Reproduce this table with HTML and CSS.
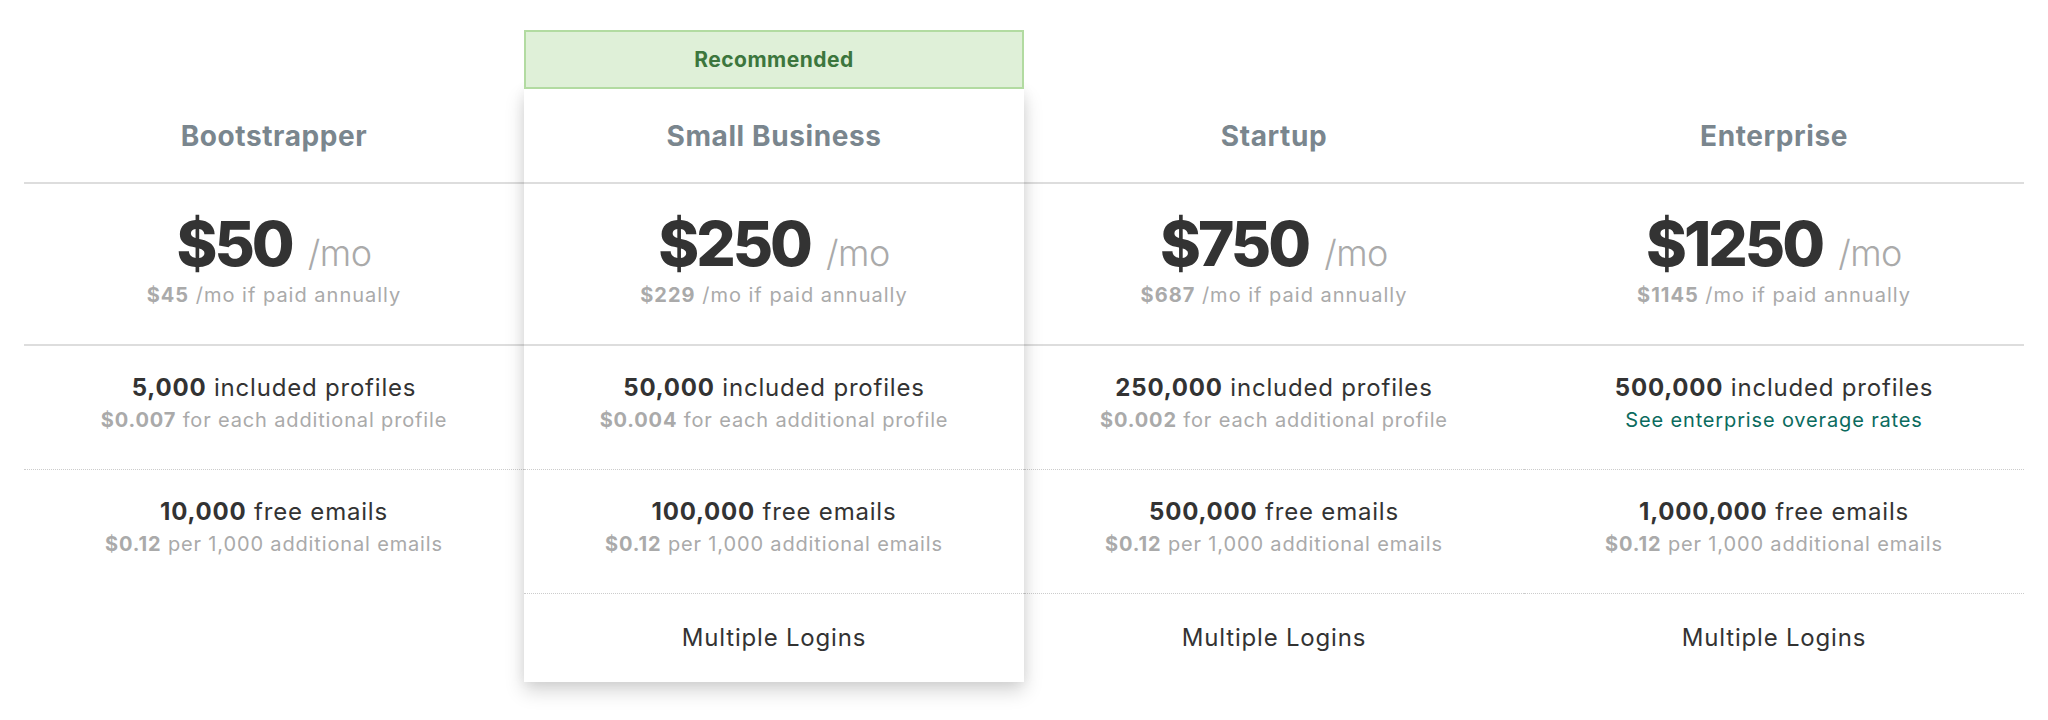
FILE: index.html
```html
<!DOCTYPE html>
<html lang="en">
<head>
<meta charset="utf-8">
<title>Pricing</title>
<link rel="stylesheet" href="styles.css">
</head>
<body>
<div class="pricing">
  <div class="plan">
    <div class="plan-body">
      <div class="plan-name">Bootstrapper</div>
      <div class="plan-price">
        <div class="price"><span class="amount">$50</span><span class="per">/mo</span></div>
        <div class="annual"><b>$45</b> /mo if paid annually</div>
      </div>
      <div class="feature">
        <div class="main"><b>5,000</b> included profiles</div>
        <div class="sub"><b>$0.007</b> for each additional profile</div>
      </div>
      <div class="feature">
        <div class="main"><b>10,000</b> free emails</div>
        <div class="sub"><b>$0.12</b> per 1,000 additional emails</div>
      </div>
    </div>
  </div>

  <div class="plan featured">
    <div class="badge">Recommended</div>
    <div class="plan-body">
      <div class="plan-name">Small Business</div>
      <div class="plan-price">
        <div class="price"><span class="amount">$250</span><span class="per">/mo</span></div>
        <div class="annual"><b>$229</b> /mo if paid annually</div>
      </div>
      <div class="feature">
        <div class="main"><b>50,000</b> included profiles</div>
        <div class="sub"><b>$0.004</b> for each additional profile</div>
      </div>
      <div class="feature">
        <div class="main"><b>100,000</b> free emails</div>
        <div class="sub"><b>$0.12</b> per 1,000 additional emails</div>
      </div>
      <div class="feature single">
        <div class="main">Multiple Logins</div>
      </div>
    </div>
  </div>

  <div class="plan">
    <div class="plan-body">
      <div class="plan-name">Startup</div>
      <div class="plan-price">
        <div class="price"><span class="amount">$750</span><span class="per">/mo</span></div>
        <div class="annual"><b>$687</b> /mo if paid annually</div>
      </div>
      <div class="feature">
        <div class="main"><b>250,000</b> included profiles</div>
        <div class="sub"><b>$0.002</b> for each additional profile</div>
      </div>
      <div class="feature">
        <div class="main"><b>500,000</b> free emails</div>
        <div class="sub"><b>$0.12</b> per 1,000 additional emails</div>
      </div>
      <div class="feature single">
        <div class="main">Multiple Logins</div>
      </div>
    </div>
  </div>

  <div class="plan">
    <div class="plan-body">
      <div class="plan-name">Enterprise</div>
      <div class="plan-price">
        <div class="price"><span class="amount">$1250</span><span class="per">/mo</span></div>
        <div class="annual"><b>$1145</b> /mo if paid annually</div>
      </div>
      <div class="feature">
        <div class="main"><b>500,000</b> included profiles</div>
        <div class="sub"><a class="link" href="#">See enterprise overage rates</a></div>
      </div>
      <div class="feature">
        <div class="main"><b>1,000,000</b> free emails</div>
        <div class="sub"><b>$0.12</b> per 1,000 additional emails</div>
      </div>
      <div class="feature single">
        <div class="main">Multiple Logins</div>
      </div>
    </div>
  </div>
</div>
</body>
</html>
```

FILE: styles.css
```css
html, body {
  margin: 0;
  padding: 0;
  background: #ffffff;
}

body {
  font-family: Inter, Lato, "Liberation Sans", sans-serif;
  color: #333333;
}

.pricing {
  display: flex;
  padding: 30px 24px 40px;
}

.plan {
  flex: 1 1 0;
  min-width: 0;
  padding-top: 59px;
  text-align: center;
}

.plan.featured {
  padding-top: 0;
  position: relative;
  z-index: 1;
}

.badge {
  box-sizing: border-box;
  height: 59px;
  background: #dff0d8;
  border: 2px solid #b2dba1;
  color: #3c763d;
  font-weight: 700;
  font-size: 21px;
  letter-spacing: 0.5px;
  line-height: 55px;
  position: relative;
  z-index: 2;
}

.featured .plan-body {
  background: #ffffff;
  box-shadow: 0 9px 18px rgba(0, 0, 0, 0.17), 0 0 12px rgba(0, 0, 0, 0.06);
}

.plan-name {
  padding: 29px 0 28px;
  font-size: 28px;
  line-height: 36px;
  font-weight: 700;
  letter-spacing: 0.6px;
  color: #7a868e;
  border-bottom: 2px solid #dddddd;
}

.plan-price {
  padding: 28px 0 35px;
  border-bottom: 2px solid #dddddd;
}

.price {
  display: flex;
  justify-content: center;
  align-items: baseline;
  gap: 16px;
  height: 64px;
}

.amount {
  font-size: 62px;
  line-height: 64px;
  font-weight: 800;
  letter-spacing: -3px;
  color: #333333;
}

.per {
  font-size: 36px;
  line-height: 36px;
  font-weight: 300;
  letter-spacing: -0.5px;
  color: #aaaaaa;
}

.annual {
  margin-top: 5px;
  font-size: 20px;
  line-height: 28px;
  letter-spacing: 1px;
  color: #aaaaaa;
}

.annual b,
.sub b {
  font-weight: 700;
  color: #aaaaaa;
}

.feature {
  padding: 26px 0 33px;
}

.feature + .feature {
  border-top: 1px dotted #cccccc;
}

.feature.single {
  padding: 28px 0 28px;
}

.main {
  font-size: 24px;
  line-height: 32px;
  letter-spacing: 0.8px;
  color: #333333;
}

.main b {
  font-weight: 700;
}

.sub {
  font-size: 20px;
  line-height: 32px;
  letter-spacing: 0.85px;
  color: #aaaaaa;
}

.link {
  color: #0b6b5e;
  text-decoration: none;
}
```
